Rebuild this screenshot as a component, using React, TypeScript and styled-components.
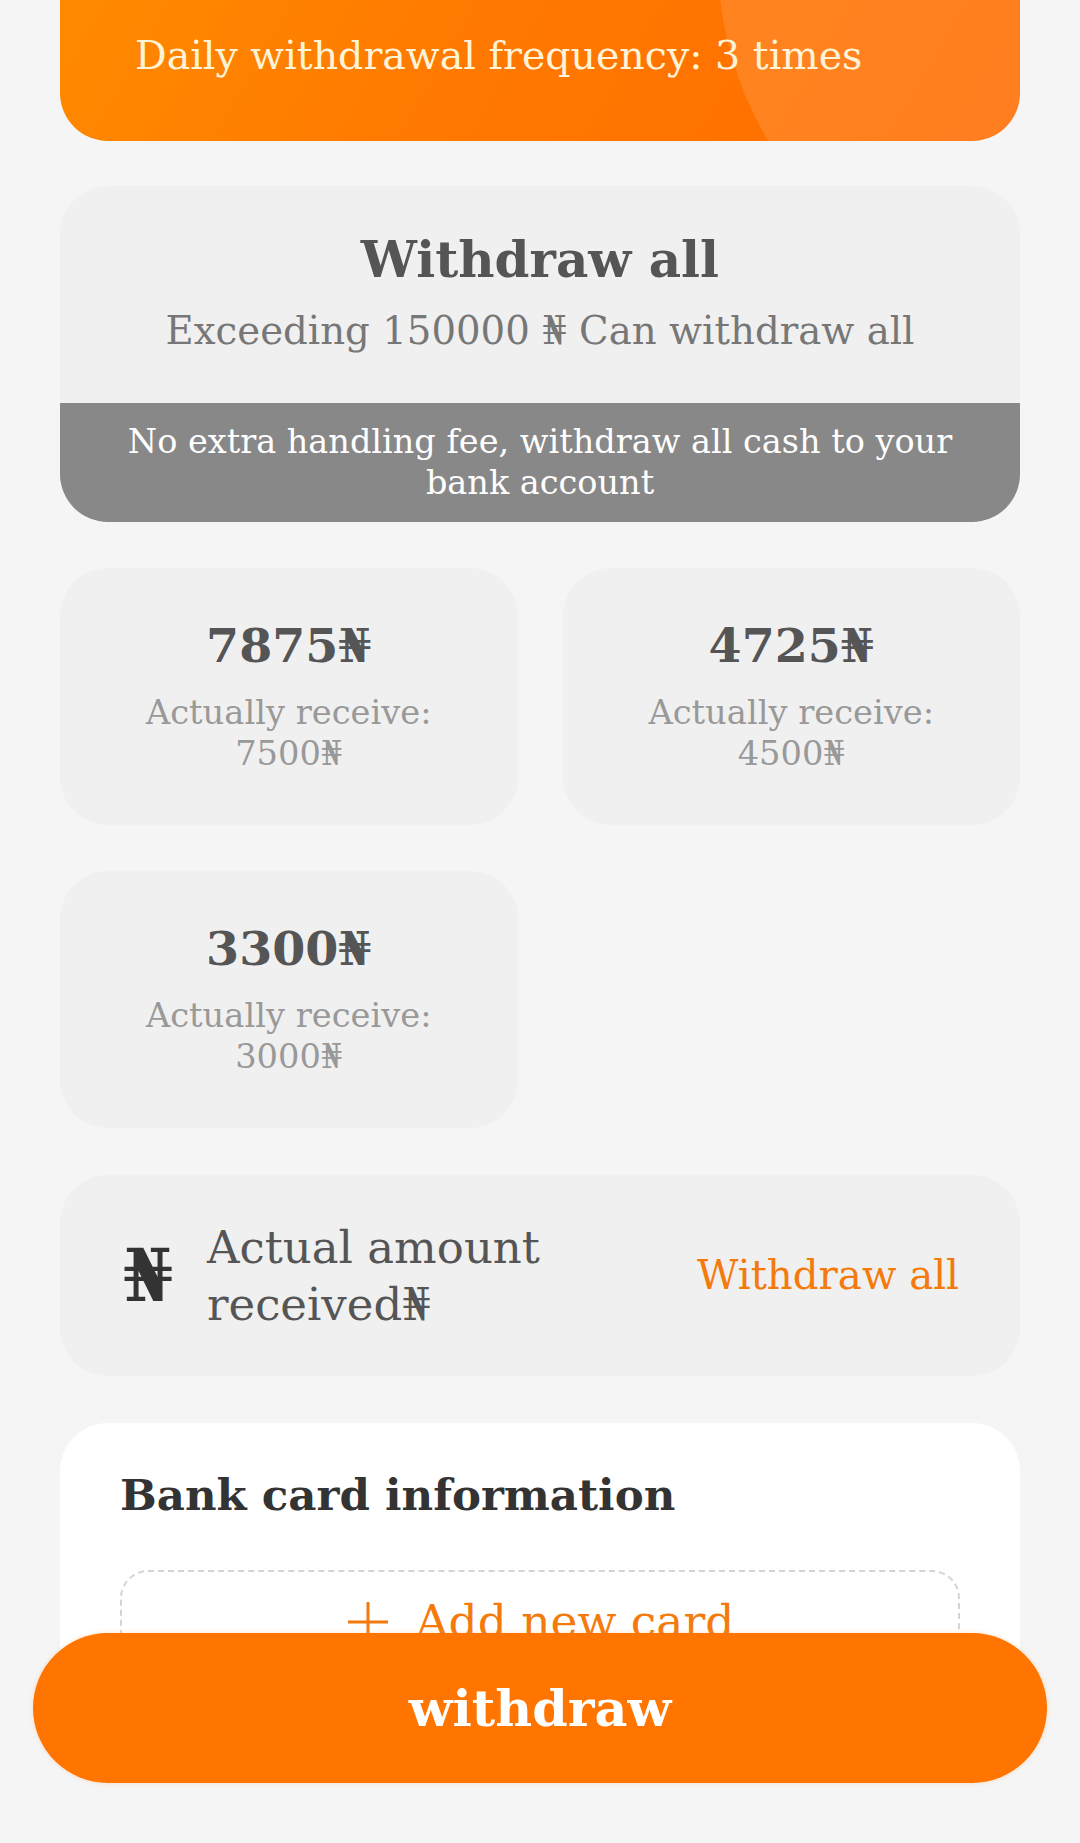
import styled, { createGlobalStyle } from "styled-components";

const GlobalStyle = createGlobalStyle`
  html, body {
    margin: 0;
    padding: 0;
    background: #f5f5f5;
  }
  body {
    font-family: "DejaVu Serif", "Liberation Serif", serif;
  }
  * {
    box-sizing: border-box;
  }
`;

const Page = styled.div`
  min-height: 1843px;
  padding: 0 60px 120px;
  background: #f5f5f5;
`;

const LimitCard = styled.div`
  position: relative;
  overflow: hidden;
  height: 141px;
  padding: 30px 0 0 75px;
  border-radius: 0 0 48px 48px;
  background: linear-gradient(120deg, #ff8a00 0%, #ff7800 45%, #ff6c00 100%);
`;

const LimitGlow = styled.div`
  position: absolute;
  left: 658px;
  top: -390px;
  width: 700px;
  height: 700px;
  border-radius: 50%;
  background: rgba(255, 255, 255, 0.12);
`;

const LimitText = styled.div`
  position: relative;
  font-size: 39.5px;
  line-height: 50px;
  color: #fff4d8;
`;

const AllCard = styled.div`
  margin-top: 45px;
  border-radius: 48px;
  overflow: hidden;
  background: #f0f0f0;
  text-align: center;
`;

const AllTop = styled.div`
  height: 217px;
  padding-top: 42px;
`;

const AllTitle = styled.div`
  font-size: 50px;
  line-height: 64px;
  font-weight: 700;
  color: #555;
`;

const AllSubtitle = styled.div`
  margin-top: 14px;
  font-size: 38.7px;
  line-height: 50px;
  color: #777;
`;

const AllBand = styled.div`
  height: 119px;
  padding: 18px 40px 0;
  background: #888;
  color: #fff;
  font-size: 33.5px;
  line-height: 41px;
`;

const AmountGrid = styled.div`
  margin-top: 46px;
  display: grid;
  grid-template-columns: 1fr 1fr;
  gap: 46px 45px;
`;

const AmountCard = styled.div`
  height: 257px;
  padding-top: 45px;
  border-radius: 48px;
  background: #f0f0f0;
  text-align: center;
`;

const AmountValue = styled.div`
  font-size: 47.5px;
  line-height: 64px;
  font-weight: 700;
  color: #555;
`;

const AmountReceive = styled.div`
  margin-top: 15px;
  font-size: 33.7px;
  line-height: 41px;
  color: #999;
`;

const ActualRow = styled.div`
  margin-top: 47px;
  height: 201px;
  padding: 0 61px 0 60px;
  border-radius: 48px;
  background: #f0f0f0;
  display: flex;
  align-items: center;
`;

const NairaIcon = styled.span`
  width: 56px;
  font-size: 72px;
  line-height: 1;
  font-weight: 700;
  color: #333;
  text-align: center;
`;

const ActualLabel = styled.div`
  flex: 1;
  margin-left: 31px;
  font-size: 45px;
  line-height: 57px;
  color: #555;
`;

const OrangeLink = styled.span`
  font-size: 40.3px;
  line-height: 50px;
  color: #f47a0c;
`;

const BankCard = styled.div`
  margin-top: 47px;
  padding: 42px 60px 60px;
  border-radius: 48px;
  background: #fff;
`;

const BankTitle = styled.div`
  font-size: 43.5px;
  line-height: 60px;
  font-weight: 700;
  color: #333;
`;

const AddCardBox = styled.div`
  margin-top: 45px;
  padding: 20px 0;
  border: 2px dashed #d4d4d4;
  border-radius: 28px;
  display: flex;
  align-items: center;
  justify-content: center;
  gap: 26px;
  font-size: 45.5px;
  line-height: 60px;
  color: #f47a0c;
`;

const WithdrawButton = styled.button`
  position: fixed;
  left: 33px;
  right: 33px;
  bottom: 60px;
  height: 150px;
  border: none;
  border-radius: 75px;
  background: #ff7500;
  color: #fff;
  font-family: "DejaVu Serif", "Liberation Serif", serif;
  font-size: 50.8px;
  font-weight: 700;
  box-shadow: 0 0 4px rgba(255, 160, 80, 0.35);
`;

const amounts = [
  { value: "7875₦", receive: "7500₦" },
  { value: "4725₦", receive: "4500₦" },
  { value: "3300₦", receive: "3000₦" },
];

function PlusIcon() {
  return (
    <svg width="44" height="44" viewBox="0 0 44 44">
      <path d="M22 2v40M2 22h40" stroke="#f47a0c" strokeWidth="3" fill="none" />
    </svg>
  );
}

export default function App() {
  return (
    <>
      <GlobalStyle />
      <Page>
        <LimitCard>
          <LimitGlow />
          <LimitText>Daily withdrawal frequency: 3 times</LimitText>
        </LimitCard>

        <AllCard>
          <AllTop>
            <AllTitle>Withdraw all</AllTitle>
            <AllSubtitle>Exceeding 150000 ₦ Can withdraw all</AllSubtitle>
          </AllTop>
          <AllBand>
            No extra handling fee, withdraw all cash to your bank account
          </AllBand>
        </AllCard>

        <AmountGrid>
          {amounts.map((a) => (
            <AmountCard key={a.value}>
              <AmountValue>{a.value}</AmountValue>
              <AmountReceive>
                Actually receive:
                <br />
                {a.receive}
              </AmountReceive>
            </AmountCard>
          ))}
        </AmountGrid>

        <ActualRow>
          <NairaIcon>₦</NairaIcon>
          <ActualLabel>
            Actual amount
            <br />
            received₦
          </ActualLabel>
          <OrangeLink>Withdraw all</OrangeLink>
        </ActualRow>

        <BankCard>
          <BankTitle>Bank card information</BankTitle>
          <AddCardBox>
            <PlusIcon />
            <span>Add new card</span>
          </AddCardBox>
        </BankCard>
      </Page>
      <WithdrawButton>withdraw</WithdrawButton>
    </>
  );
}
